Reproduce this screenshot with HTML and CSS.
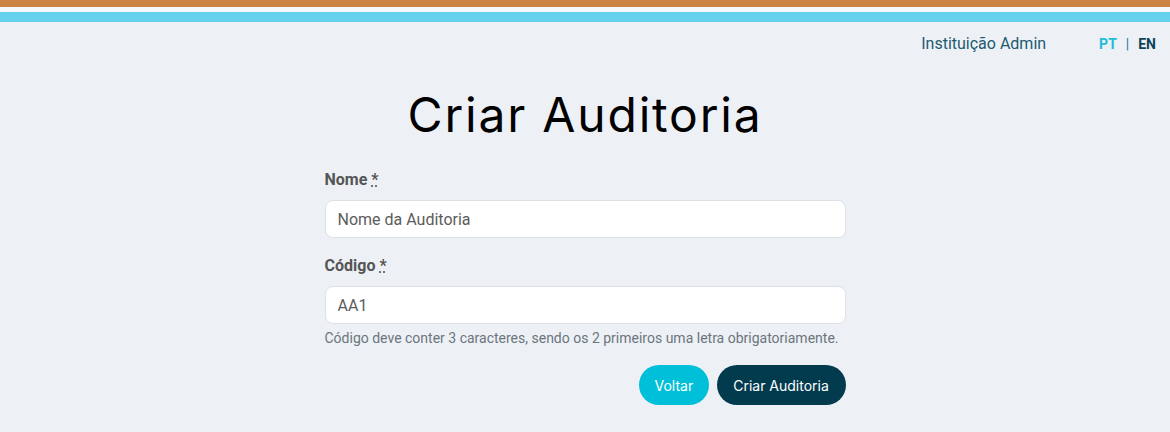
FILE: index.html
```html
<!DOCTYPE html>
<html lang="pt">
<head>
<meta charset="utf-8">
<title>Criar Auditoria</title>
<link rel="stylesheet" href="styles.css">
</head>
<body>
<div class="bars">
  <div class="bar bar-orange"></div>
  <div class="bar bar-blue"></div>
</div>
<header class="topnav">
  <span class="user">Instituição Admin</span>
  <nav class="lang"><a class="lang-pt">PT</a><span class="sep">|</span><a class="lang-en">EN</a></nav>
</header>
<main class="page">
  <h1 class="title">Criar Auditoria</h1>
  <form class="form">
    <div class="field">
      <label class="label">Nome <abbr class="req" title="obrigatório">*</abbr></label>
      <input class="input" type="text" placeholder="Nome da Auditoria">
    </div>
    <div class="field">
      <label class="label">Código <abbr class="req" title="obrigatório">*</abbr></label>
      <input class="input" type="text" placeholder="AA1">
      <small class="help">Código deve conter 3 caracteres, sendo os 2 primeiros uma letra obrigatoriamente.</small>
    </div>
    <div class="actions">
      <button type="button" class="btn btn-back">Voltar</button>
      <button type="button" class="btn btn-primary">Criar Auditoria</button>
    </div>
  </form>
</main>
</body>
</html>
```
FILE: styles.css
```css
* { box-sizing: border-box; }
html, body { margin: 0; padding: 0; }
body {
  background: #edf1f6;
  font-family: Roboto, "Liberation Sans", sans-serif;
  height: 432px;
  overflow: hidden;
}
.bars { display: flex; flex-direction: column; gap: 5px; background: #f6f8fb; }
.bar { height: 7px; }
.bar-orange { background: #cc8445; }
.bar-blue { height: 10px; background: #66d1ec; }
.topnav {
  display: flex;
  justify-content: flex-end;
  align-items: center;
  padding: 10px 14px 0 0;
  height: 34px;
  font-size: 16px;
  line-height: 24px;
}
.user { color: #1d5a70; margin-right: 53px; }
.lang { display: flex; align-items: center; gap: 9px; font-size: 14px; font-weight: 700; }
.lang-pt { color: #1cbdd8; }
.sep { color: #1d7aa0; font-weight: 400; }
.lang-en { color: #0d4358; }
.page { width: 521px; margin: 0 auto; }
.title {
  font-family: "Inter", "Noto Sans", sans-serif;
  font-weight: 400;
  font-size: 48px;
  line-height: 60px;
  color: #000;
  text-align: center;
  margin: 29px 0 23px;
  letter-spacing: 1.8px;
}
.form { display: flex; flex-direction: column; }
.field { display: flex; flex-direction: column; margin-bottom: 16px; }
.label { font-weight: 700; font-size: 16px; line-height: 24px; color: #555; margin-bottom: 8px; }
.req { text-decoration: underline dotted; cursor: help; }
.input {
  height: 38px;
  border: 1px solid #dde1e6;
  border-radius: 8px;
  background: #fff;
  padding: 0 12px;
  font-family: Roboto, "Liberation Sans", sans-serif;
  font-size: 16px;
  color: #333;
}
.input::placeholder { color: #5c5c5c; }
.help { font-size: 14px; line-height: 21px; color: #6c757d; margin-top: 4px; }
.actions { display: flex; justify-content: flex-end; gap: 8px; margin-top: 0; }
.btn {
  height: 40px;
  border: none;
  border-radius: 20px;
  font-family: "Inter", "Noto Sans", sans-serif;
  font-size: 14px;
  color: #fff;
  padding: 0 16px;
}
.btn-back { background: #00bfd8; width: 70px; }
.btn-primary { background: #023b4e; width: 129px; }
```
